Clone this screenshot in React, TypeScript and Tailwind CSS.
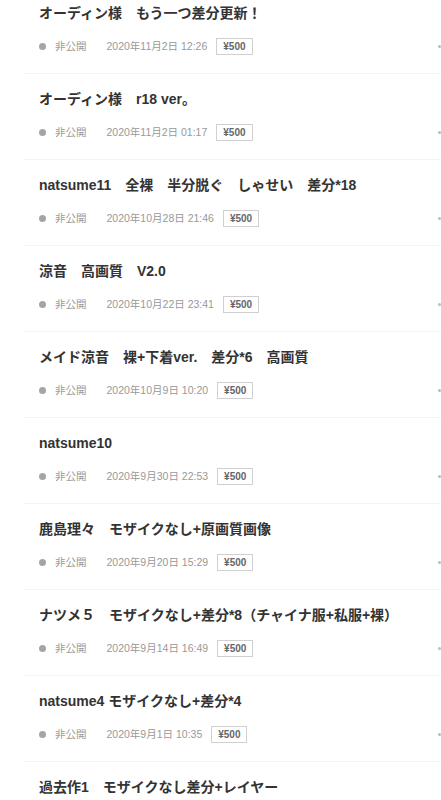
import React from "react";

type Post = {
  title: string;
  date: string;
  price: string;
};

const posts: Post[] = [
  { title: "オーディン様　もう一つ差分更新！", date: "2020年11月2日 12:26", price: "¥500" },
  { title: "オーディン様　r18 ver。", date: "2020年11月2日 01:17", price: "¥500" },
  { title: "natsume11　全裸　半分脱ぐ　しゃせい　差分*18", date: "2020年10月28日 21:46", price: "¥500" },
  { title: "涼音　高画質　V2.0", date: "2020年10月22日 23:41", price: "¥500" },
  { title: "メイド涼音　裸+下着ver.　差分*6　高画質", date: "2020年10月9日 10:20", price: "¥500" },
  { title: "natsume10", date: "2020年9月30日 22:53", price: "¥500" },
  { title: "鹿島理々　モザイクなし+原画質画像", date: "2020年9月20日 15:29", price: "¥500" },
  { title: "ナツメ５　モザイクなし+差分*8（チャイナ服+私服+裸）", date: "2020年9月14日 16:49", price: "¥500" },
  { title: "natsume4 モザイクなし+差分*4", date: "2020年9月1日 10:35", price: "¥500" },
  { title: "過去作1　モザイクなし差分+レイヤー", date: "2020年8月25日 18:02", price: "¥500" },
];

export default function App() {
  return (
    <main
      className="h-[800px] w-[441px] overflow-hidden bg-white"
      style={{ fontFamily: '"Liberation Sans", "Noto Sans CJK JP", sans-serif' }}
    >
      {/* list is scrolled: first row's top is above the window */}
      <ul className="-mt-[13px] pl-[24px]">
        {posts.map((p) => (
          <PostRow key={p.title} post={p} />
        ))}
      </ul>
    </main>
  );
}

function PostRow({ post }: { post: Post }) {
  return (
    <li className="border-t border-[#f3f3f3] pl-[15px] pt-[15px] pb-[18px]">
      <p className="truncate text-[14px] font-bold leading-[20px] text-[#333]">{post.title}</p>
      <div className="mt-[15px] flex h-[17px] items-center text-[10.5px] text-[#999]">
        <span className="h-[7px] w-[7px] shrink-0 rounded-full bg-[#a5a5a5]" />
        <span className="ml-[9px]">非公開</span>
        <span className="ml-[20px]">{post.date}</span>
        <span className="ml-[9px] flex h-[17px] items-center border border-[#d0d0d0] px-[6px] text-[10px] font-bold text-[#666]">
          {post.price}
        </span>
        <span className="ml-auto -mr-[12px] flex gap-[3px]">
          <span className="h-[3px] w-[3px] rounded-full bg-[#bbb]" />
          <span className="h-[3px] w-[3px] rounded-full bg-[#bbb]" />
          <span className="h-[3px] w-[3px] rounded-full bg-[#bbb]" />
        </span>
      </div>
    </li>
  );
}
